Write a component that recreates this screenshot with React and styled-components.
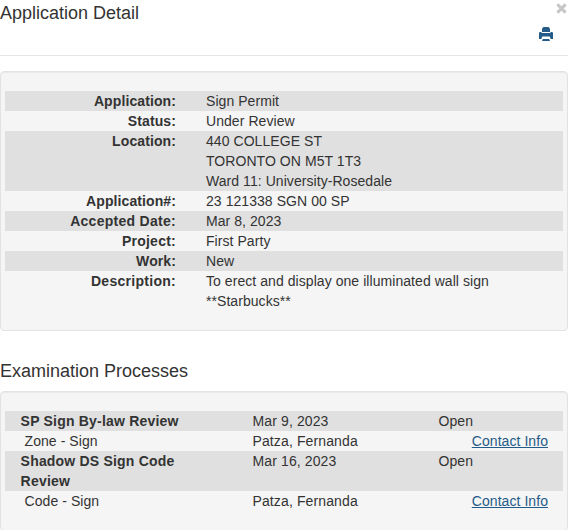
import React from "react";
import styled, { createGlobalStyle } from "styled-components";

const details = [
  { label: "Application:", lines: ["Sign Permit"] },
  { label: "Status:", lines: ["Under Review"] },
  {
    label: "Location:",
    lines: [
      "440 COLLEGE ST",
      "TORONTO ON M5T 1T3",
      "Ward 11: University-Rosedale",
    ],
  },
  { label: "Application#:", lines: ["23 121338 SGN 00 SP"] },
  { label: "Accepted Date:", lines: ["Mar 8, 2023"], tracking: 0.28 },
  { label: "Project:", lines: ["First Party"], tracking: 0.25 },
  { label: "Work:", lines: ["New"] },
  {
    label: "Description:",
    lines: ["To erect and display one illuminated wall sign", "**Starbucks**"],
    tracking: 0.28,
  },
];

const processes = [
  {
    name: "SP Sign By-law Review",
    date: "Mar 9, 2023",
    status: "Open",
    task: "Zone - Sign",
    contact: "Patza, Fernanda",
  },
  {
    name: "Shadow DS Sign Code Review",
    date: "Mar 16, 2023",
    status: "Open",
    task: "Code - Sign",
    contact: "Patza, Fernanda",
  },
];

function PrintIcon() {
  return (
    <svg width="14" height="14" viewBox="0 0 14 14" fill="currentColor">
      <path d="M4.5 0h5L11 1.5V5H3V1.5z" />
      <path d="M0 6.2Q0 5 1.2 5H2l1 1h8l1-1h.8Q14 5 14 6.2V12h-2.3l-1-2.4H3.3l-1 2.4H0z" />
      <path d="M3.9 12h6.2l.9 2H3z" />
    </svg>
  );
}

function CloseIcon() {
  return (
    <svg width="11" height="11" viewBox="0 0 11 11" stroke="currentColor">
      <path d="M1.4 1.4l8.2 8.2M9.6 1.4L1.4 9.6" strokeWidth="2.9" />
    </svg>
  );
}

function App() {
  return (
    <>
      <GlobalStyle />
      <Header>
        <Title>Application Detail</Title>
        <Actions>
          <CloseButton aria-label="Close">
            <CloseIcon />
          </CloseButton>
          <PrintButton aria-label="Print">
            <PrintIcon />
          </PrintButton>
        </Actions>
      </Header>
      <Body>
        <Well>
          {details.map(({ label, lines, tracking }, index) => (
            <Row key={label} $shaded={index % 2 === 0}>
              <Label $tracking={tracking || 0.1}>{label}</Label>
              <Cell $span={8}>
                {lines.map((line) => (
                  <div key={line}>{line}</div>
                ))}
              </Cell>
            </Row>
          ))}
        </Well>
        <SectionTitle>Examination Processes</SectionTitle>
        <Well>
          {processes.map(({ name, date, status, task, contact }) => (
            <React.Fragment key={name}>
              <Row $shaded>
                <NameCell $span={5} $bold $tracking={0.2}>
                  {name}
                </NameCell>
                <Cell $span={4} $tracking={0.12}>
                  {date}
                </Cell>
                <Cell $span={3}>{status}</Cell>
              </Row>
              <Row>
                <NameCell $span={5}>&nbsp;{task}</NameCell>
                <Cell $span={4} $tracking={0.12}>
                  {contact}
                </Cell>
                <Cell $span={3} $align="right">
                  <Link href="#">Contact Info</Link>
                </Cell>
              </Row>
            </React.Fragment>
          ))}
        </Well>
      </Body>
    </>
  );
}

const GlobalStyle = createGlobalStyle`
  * {
    box-sizing: border-box;
  }

  body {
    margin: 0;
    height: 530px;
    overflow: hidden;
    background: #fff;
    color: #333;
    font-family: "Liberation Sans", Arial, sans-serif;
    font-size: 14px;
    line-height: 20px;
  }
`;

const Header = styled.header`
  display: flex;
  justify-content: space-between;
  height: 56px;
  border-bottom: 1px solid #e5e5e5;
`;

const Title = styled.h4`
  margin: 0;
  font-size: 18px;
  font-weight: 400;
  line-height: 26px;
`;

const Actions = styled.div`
  display: flex;
  flex-direction: column;
  align-items: flex-end;
`;

const CloseButton = styled.button`
  display: flex;
  margin-right: 1px;
  padding: 3px 0 0;
  border: 0;
  background: none;
  color: #000;
  opacity: 0.22;
`;

const PrintButton = styled.button`
  display: flex;
  margin: 13px 15px 0 0;
  padding: 0;
  border: 0;
  background: none;
  color: #245b88;
`;

const Body = styled.main`
  padding-top: 15px;
`;

const Well = styled.section`
  padding: 19px 4px;
  border: 1px solid #e3e3e3;
  border-radius: 4px;
  background: #f5f5f5;
  box-shadow: inset 0 1px 1px rgba(0, 0, 0, 0.05);
`;

const Row = styled.div`
  display: flex;
  background: ${(props) => (props.$shaded ? "#e0e0e0" : "transparent")};
`;

const Cell = styled.div`
  flex: 0 0 ${(props) => (props.$span / 12) * 100}%;
  padding: 0 15px;
  font-weight: ${(props) => (props.$bold ? 700 : 400)};
  letter-spacing: ${(props) => props.$tracking || 0.06}px;
  text-align: ${(props) => props.$align || "left"};
`;

const Label = styled(Cell).attrs({ $span: 4, $bold: true, $align: "right" })``;

const NameCell = styled(Cell)`
  padding-left: 15.6px;
`;

const SectionTitle = styled.h4`
  margin: 30px 0 10px;
  font-size: 18px;
  font-weight: 400;
  line-height: 20px;
`;

const Link = styled.a`
  color: #245b88;
  text-decoration: underline;
`;

export default App;
